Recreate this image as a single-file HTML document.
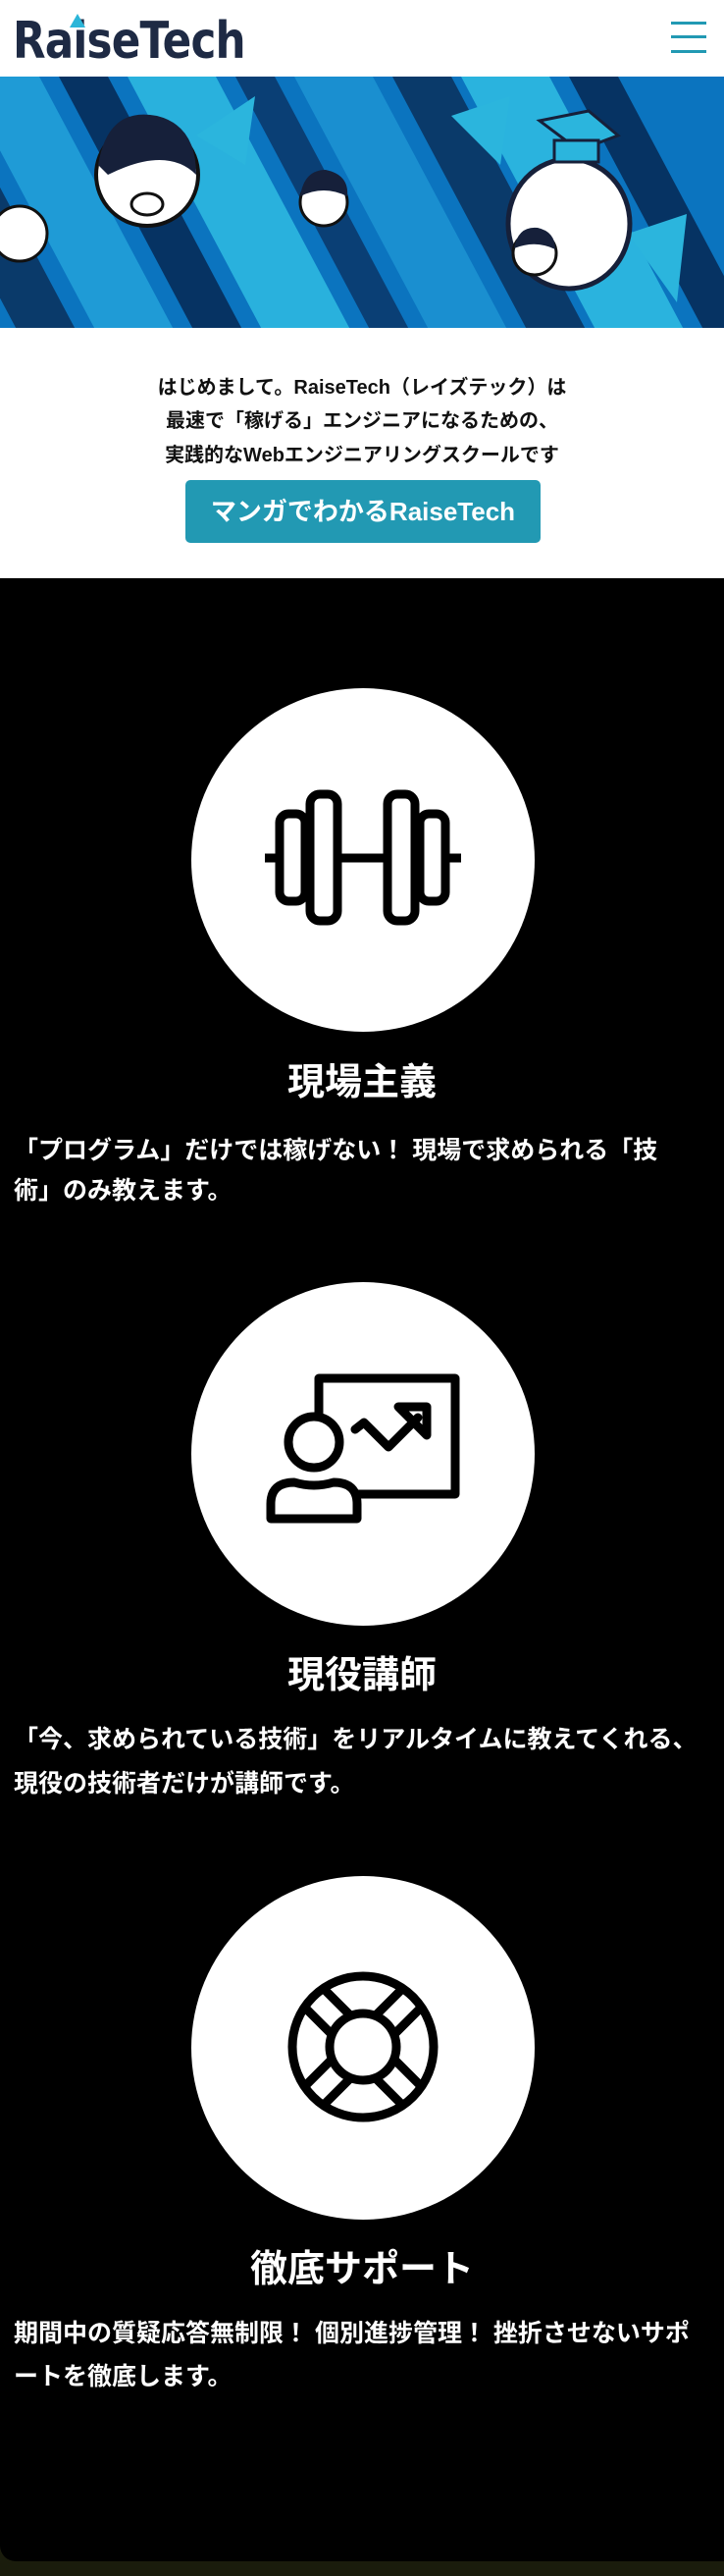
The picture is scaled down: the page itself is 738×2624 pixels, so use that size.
<!DOCTYPE html>
<html><head><meta charset="utf-8">
<style>
*{margin:0;padding:0;box-sizing:border-box}
body{width:738px;height:2624px;background:#1a1c0c;font-family:"Liberation Sans","Noto Sans CJK JP",sans-serif;font-weight:bold;overflow:hidden;position:relative}
.header{position:absolute;left:0;top:0;width:738px;height:78px;background:#fff}
.logo{position:absolute;left:13px;top:12px;font-size:52px;color:#1e2a44;letter-spacing:-1px;font-family:"DejaVu Sans","Liberation Sans",sans-serif;font-weight:bold;transform:scaleX(0.84);transform-origin:left}
.tri{position:absolute;left:71px;top:14px;width:0;height:0;border-left:8px solid transparent;border-right:8px solid transparent;border-bottom:14px solid #2bb5d8}
.hb{position:absolute;left:684px;width:36px;height:3px;background:#2299b3}
.hero{position:absolute;left:0;top:78px;width:738px;height:256px;overflow:hidden;background:#0a6fb8}
.intro{position:absolute;left:0;top:334px;width:738px;height:255px;background:#fff;text-align:center}
.intro p{position:absolute;left:0;width:738px;font-size:20px;color:#111;line-height:34px}
.btn{position:absolute;left:189px;top:155px;width:362px;height:64px;background:#2299b3;border-radius:5px;color:#fff;font-size:26px;line-height:64px;text-align:center}
.black{position:absolute;left:0;top:589px;width:738px;height:2020px;background:#000;border-radius:0 0 0 16px}
.circ{position:absolute;left:195px;width:350px;height:350px;border-radius:50%;background:#fff}
.circ svg{position:absolute;left:-5px;top:-2px}
.t{position:absolute;left:0;width:738px;text-align:center;color:#fff;font-size:38px;line-height:44px}
.b{position:absolute;left:14px;color:#fff;font-size:25px;line-height:42px;white-space:nowrap}
</style></head><body>
<div class="header">
  <div class="logo">RaiseTech</div>
  <div class="tri"></div>
  <div class="hb" style="top:22px"></div>
  <div class="hb" style="top:36px"></div>
  <div class="hb" style="top:51px"></div>
</div>
<div class="hero">
<svg width="738" height="256" viewBox="0 0 738 256">
  <rect width="738" height="256" fill="#0b74bf"/>
  <g transform="skewX(28)">
    <rect x="-120" y="0" width="60" height="256" fill="#0a3a6a"/>
    <rect x="-40" y="0" width="80" height="256" fill="#1f9bd6"/>
    <rect x="60" y="0" width="50" height="256" fill="#063363"/>
    <rect x="130" y="0" width="90" height="256" fill="#29b1dd"/>
    <rect x="240" y="0" width="40" height="256" fill="#0a3f75"/>
    <rect x="300" y="0" width="80" height="256" fill="#1a8fd0"/>
    <rect x="400" y="0" width="60" height="256" fill="#0a3a6a"/>
    <rect x="470" y="0" width="90" height="256" fill="#2ab3de"/>
    <rect x="580" y="0" width="50" height="256" fill="#063363"/>
  </g>
  <polygon points="200,60 260,20 250,90" fill="#2bb5dd"/>
  <polygon points="460,40 520,20 510,90" fill="#2bb5dd"/>
  <polygon points="640,160 700,140 690,230" fill="#2bb5dd"/>
  <circle cx="150" cy="100" r="52" fill="#fff" stroke="#111" stroke-width="4"/>
  <path d="M100,90 Q110,30 160,40 Q200,50 200,100 Q170,70 110,100Z" fill="#16203a"/>
  <ellipse cx="150" cy="130" rx="16" ry="11" fill="#fff" stroke="#111" stroke-width="3"/>
  <circle cx="330" cy="128" r="24" fill="#fff" stroke="#111" stroke-width="3"/>
  <path d="M306,122 Q310,95 332,95 Q356,100 354,122 Q330,110 306,122Z" fill="#16203a"/>
  <circle cx="20" cy="160" r="28" fill="#fff" stroke="#111" stroke-width="3"/>
  <ellipse cx="580" cy="150" rx="62" ry="66" fill="#fff" stroke="#16203a" stroke-width="5"/>
  <polygon points="550,45 600,35 630,60 590,75" fill="#2bb5dd" stroke="#16203a" stroke-width="3"/>
  <rect x="565" y="65" width="45" height="22" fill="#2bb5dd" stroke="#16203a" stroke-width="3"/>
  <circle cx="545" cy="180" r="22" fill="#fff" stroke="#111" stroke-width="3"/>
  <path d="M524,175 Q528,152 548,154 Q566,158 566,176 Q546,166 524,175Z" fill="#16203a"/>
</svg>
</div>
<div class="intro">
  <p style="top:44px">はじめまして。RaiseTech（レイズテック）は</p>
  <p style="top:78px">最速で「稼げる」エンジニアになるための、</p>
  <p style="top:113px">実践的なWebエンジニアリングスクールです</p>
  <div class="btn">マンガでわかるRaiseTech</div>
</div>
<div class="black"></div>

<div class="circ" style="top:701px">
<svg width="360" height="360" viewBox="0 0 360 360" fill="none" stroke="#000" stroke-width="9" stroke-linejoin="round">
  <rect x="95" y="130" width="26" height="89" rx="9"/>
  <rect x="126" y="110" width="28" height="129" rx="10"/>
  <rect x="205" y="110" width="28" height="129" rx="10"/>
  <rect x="238" y="130" width="26" height="89" rx="9"/>
  <path d="M80 175H95M154 175H205M264 175H280"/>
</svg>
</div>
<div class="t" style="top:1081px">現場主義</div>
<div class="b" style="top:1151px">「プログラム」だけでは稼げない！ 現場で求められる「技</div>
<div class="b" style="top:1192px">術」のみ教えます。</div>

<div class="circ" style="top:1306px">
<svg width="360" height="360" viewBox="0 0 360 360" fill="none" stroke="#000" stroke-width="9" stroke-linejoin="round" stroke-linecap="round">
  <path d="M135 138V100H274V218H175"/>
  <circle cx="130" cy="165" r="26"/>
  <path d="M86 243V228Q86 206 110 206Q130 212 150 206Q174 206 174 228V243Z"/>
  <path d="M172 152L181 145L206 170L236 140"/>
  <path d="M216 129H245V158Z"/>
</svg>
</div>
<div class="t" style="top:1685px">現役講師</div>
<div class="b" style="top:1751px">「今、求められている技術」をリアルタイムに教えてくれる、</div>
<div class="b" style="top:1796px">現役の技術者だけが講師です。</div>

<div class="circ" style="top:1911px">
<svg width="360" height="360" viewBox="0 0 360 360" fill="none" stroke="#000">
  <path d="M127 123L233 229M233 123L127 229" stroke-width="36"/>
  <path d="M127 123L233 229M233 123L127 229" stroke="#fff" stroke-width="18"/>
  <circle cx="180" cy="176" r="110" stroke="#fff" stroke-width="70"/>
  <circle cx="180" cy="176" r="72" stroke-width="9"/>
  <circle cx="180" cy="176" r="34" stroke-width="9" fill="#fff"/>
</svg>
</div>
<div class="t" style="top:2290px">徹底サポート</div>
<div class="b" style="top:2356px">期間中の質疑応答無制限！ 個別進捗管理！ 挫折させないサポ</div>
<div class="b" style="top:2400px">ートを徹底します。</div>
</body></html>
